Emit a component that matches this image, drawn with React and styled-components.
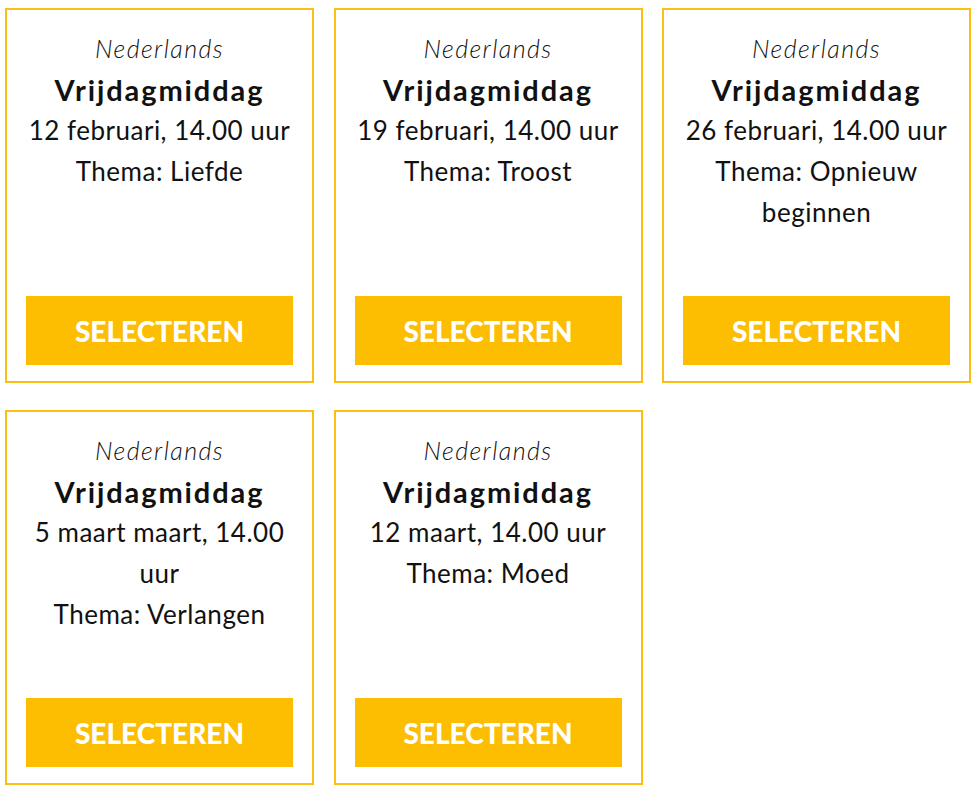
import React from "react";
import styled, { createGlobalStyle } from "styled-components";

const GlobalStyle = createGlobalStyle`
  body {
    margin: 0;
    background: #ffffff;
    font-family: "Lato", "Noto Sans", sans-serif;
  }
`;

const Grid = styled.div`
  display: grid;
  grid-template-columns: repeat(3, 309px);
  column-gap: 19.5px;
  row-gap: 27px;
  padding: 8px 0 0 5px;
`;

const Card = styled.div`
  box-sizing: border-box;
  height: 375px;
  border: 2px solid #fbbf14;
  padding: 18px 19px 16px;
  display: flex;
  flex-direction: column;
  text-align: center;
  color: #111111;
`;

const Language = styled.div`
  font-style: italic;
  font-size: 25px;
  line-height: 41px;
  font-weight: 300;
  letter-spacing: 1.4px;
`;

const Title = styled.div`
  font-weight: 700;
  font-size: 29px;
  line-height: 41px;
  letter-spacing: 1.9px;
`;

const Line = styled.div`
  font-size: 26px;
  line-height: 41px;
  letter-spacing: 0.5px;
`;

const SelectButton = styled.button`
  margin-top: auto;
  height: 69px;
  width: 100%;
  border: none;
  background: #fdbd00;
  color: #ffffff;
  font-family: "Lato", "Noto Sans", sans-serif;
  font-weight: 900;
  font-size: 28px;
  cursor: pointer;
`;

const events = [
  { date: "12 februari, 14.00 uur", theme: "Liefde" },
  { date: "19 februari, 14.00 uur", theme: "Troost" },
  { date: "26 februari, 14.00 uur", theme: "Opnieuw beginnen" },
  { date: "5 maart maart, 14.00 uur", theme: "Verlangen" },
  { date: "12 maart, 14.00 uur", theme: "Moed" },
];

export default function App() {
  return (
    <>
      <GlobalStyle />
      <Grid>
        {events.map((e, i) => (
          <Card key={i}>
            <Language>Nederlands</Language>
            <Title>Vrijdagmiddag</Title>
            <Line>{e.date}</Line>
            <Line>Thema: {e.theme}</Line>
            <SelectButton>SELECTEREN</SelectButton>
          </Card>
        ))}
      </Grid>
    </>
  );
}
